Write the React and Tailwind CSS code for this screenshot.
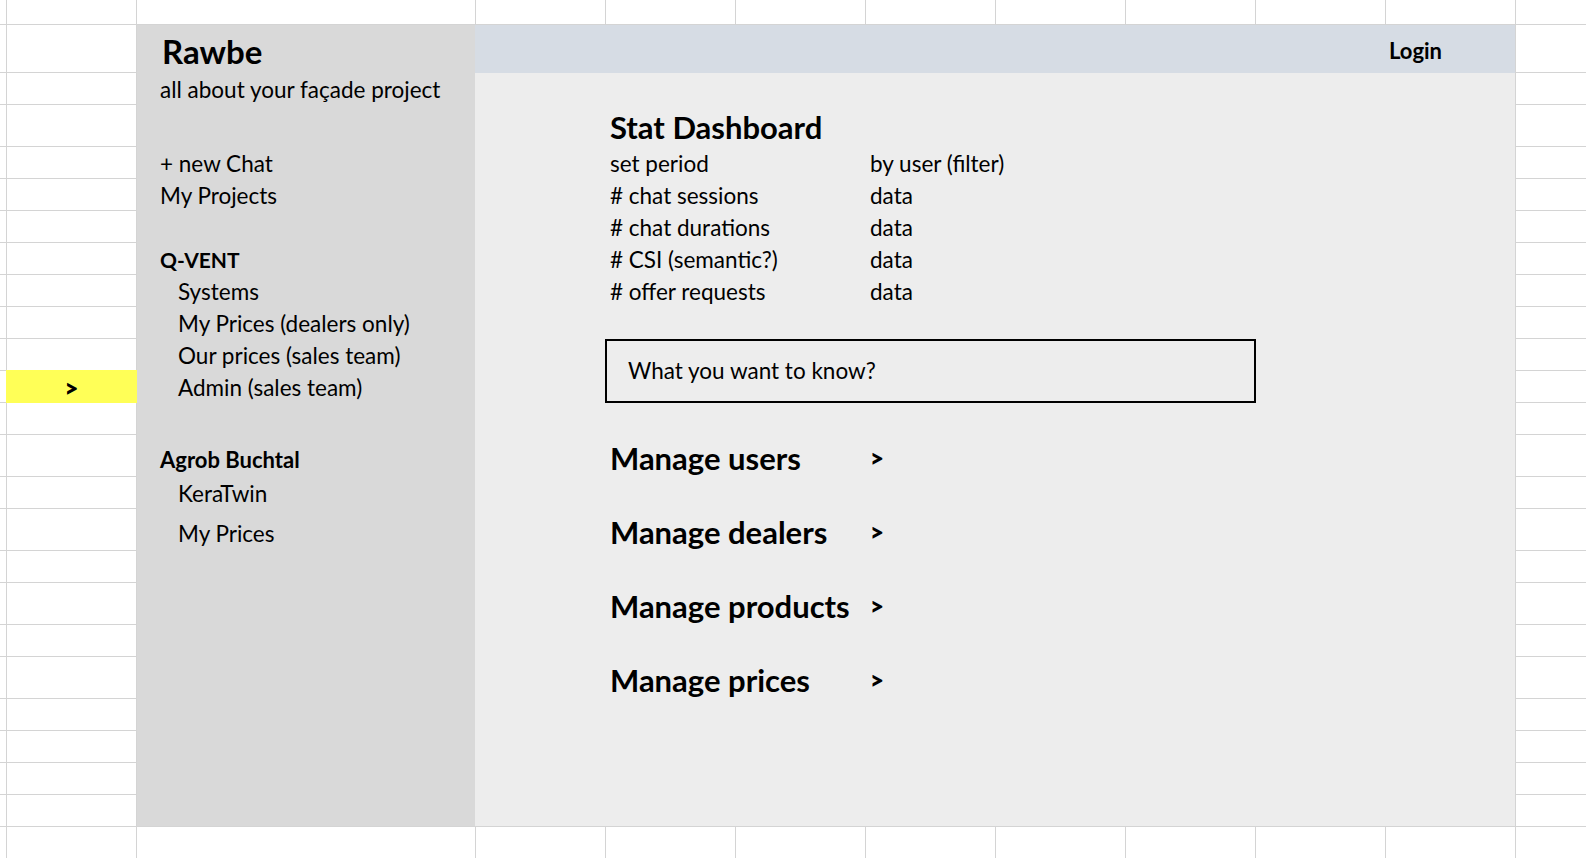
import React from 'react'

// Spreadsheet mockup: a grid of cells with one merged, shaded block holding the app wireframe.
const ROWS = 25
const COLS = 12

function inPanel(r, c) {
  return r >= 2 && r <= 24 && c >= 3 && c <= 11
}

function Row({ className = 'h-8', children }) {
  return <div className={'flex items-end ' + className}>{children}</div>
}

function Sidebar() {
  return (
    <div className="w-[338px] shrink-0 bg-[#d9d9d9] flex flex-col pl-[23px] text-[22.5px] leading-[30px]">
      <Row className="h-12 pb-1">
        <span className="ml-[2px] font-bold text-[33px] leading-[36px]">Rawbe</span>
      </Row>
      <Row>all about your façade project</Row>
      <Row className="h-[42px]" />
      <Row>+ new Chat</Row>
      <Row>My Projects</Row>
      <Row />
      <Row className="h-8 font-bold text-[21px]">Q-VENT</Row>
      <Row className="h-8 pl-[18px]">Systems</Row>
      <Row className="h-8 pl-[18px]">My Prices (dealers only)</Row>
      <Row className="h-8 pl-[18px]">Our prices (sales team)</Row>
      <Row className="h-8 pl-[18px]">Admin (sales team)</Row>
      <Row />
      <Row className="h-[42px] pb-[2px] font-bold text-[22px]">Agrob Buchtal</Row>
      <Row className="h-8 pl-[18px]">KeraTwin</Row>
      <Row className="h-[42px] pb-[2px] pl-[18px]">My Prices</Row>
    </div>
  )
}

const stats = [
  ['set period', 'by user (filter)'],
  ['# chat sessions', 'data'],
  ['# chat durations', 'data'],
  ['# CSI (semantic?)', 'data'],
  ['# offer requests', 'data'],
]

const links = ['Manage users', 'Manage dealers', 'Manage products', 'Manage prices']

function Main() {
  return (
    <div className="flex-1 flex flex-col text-[22.5px] leading-[30px]">
      <div className="h-12 bg-[#d6dce4] grid grid-cols-8 items-end pb-2">
        <span className="col-start-8 pl-1 font-bold text-[22px] leading-[28px]">Login</span>
      </div>
      <div className="flex-1 bg-[#ededed] flex flex-col pl-[130px]">
        <Row />
        <Row className="h-[42px] pb-[2px] pl-[5px]">
          <span className="font-bold text-[31px] leading-[36px]">Stat Dashboard</span>
        </Row>
        {stats.map(([label, value]) => (
          <Row key={label} className="h-8 pl-[5px]">
            <span className="w-[260px]">{label}</span>
            <span>{value}</span>
          </Row>
        ))}
        <Row />
        <div className="h-16 w-[651px] border-2 border-black flex items-center pl-[21px]">
          What you want to know?
        </div>
        <Row />
        {links.map((label, i) => (
          <React.Fragment key={label}>
            {i > 0 && <Row />}
            <Row className="h-[42px] pl-[5px]">
              <span className="w-[260px] font-bold text-[31px] leading-[38px]">{label}</span>
              <span className="font-extrabold text-[24px] leading-[38px]">&gt;</span>
            </Row>
          </React.Fragment>
        ))}
      </div>
    </div>
  )
}

export default function App() {
  const cells = []
  for (let r = 1; r <= ROWS; r++) {
    for (let c = 1; c <= COLS; c++) {
      if (!inPanel(r, c)) cells.push({ r, c })
    }
  }

  return (
    <div className="w-[1586px] h-[858px] overflow-hidden bg-white font-[Lato,sans-serif] text-black">
      <div className="grid gap-px bg-[#d4d4d4] grid-cols-[6px_129px_338px_repeat(8,129px)_200px] grid-rows-[24px_47px_31px_41px_repeat(9,31px)_41px_31px_41px_31px_41px_31px_41px_repeat(5,31px)]">
        <div className="col-start-3 col-end-12 row-start-2 row-end-25 flex">
          <Sidebar />
          <Main />
        </div>
        {cells.map(({ r, c }) =>
          r === 12 && c === 2 ? (
            <div key={r + '-' + c} className="-m-px bg-[#ffff57] flex items-end justify-center font-extrabold text-[24px] leading-[31px]">
              &gt;
            </div>
          ) : (
            <div key={r + '-' + c} className="bg-white" />
          )
        )}
      </div>
    </div>
  )
}
